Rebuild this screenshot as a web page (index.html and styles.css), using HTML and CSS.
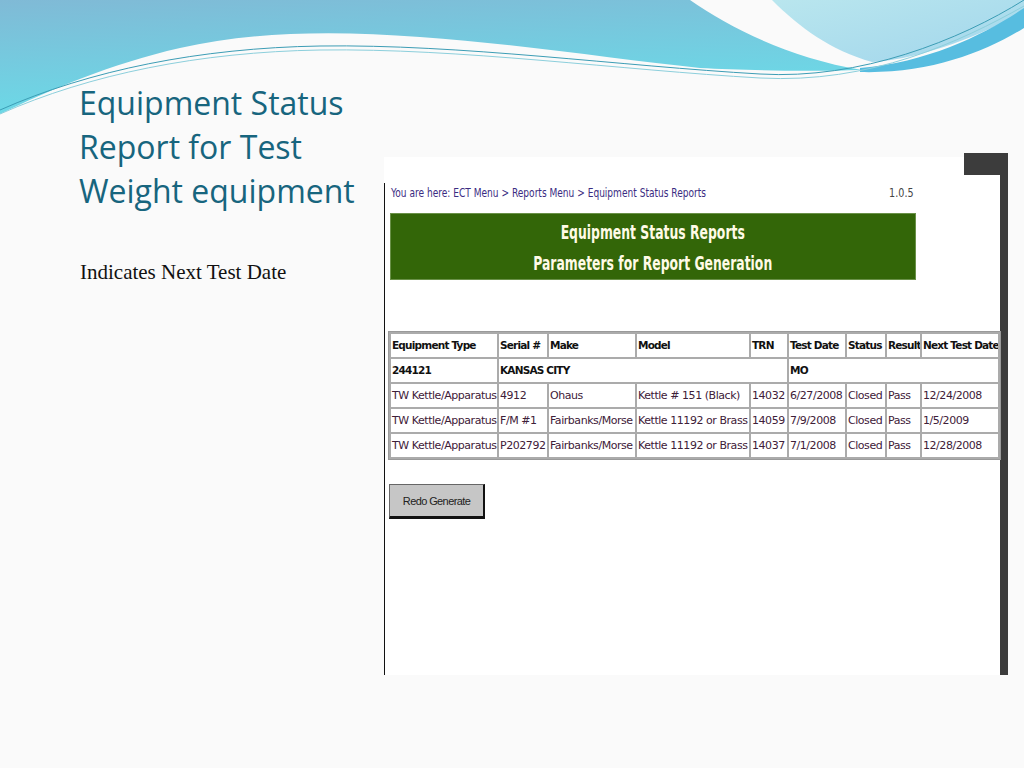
FILE: index.html
```html
<!DOCTYPE html>
<html lang="en">
  <head>
    <meta charset="utf-8" />
    <title>Equipment Status Report for Test Weight equipment</title>
    <link rel="stylesheet" href="styles.css">
  </head>
  <body>
    <div class="slide">
      <svg class="wave" width="1024" height="130" viewBox="0 0 1024 130">
        <defs>
          <linearGradient id="blue-left" x1="0" y1="0" x2="0.3" y2="1">
            <stop offset="0" stop-color="#80bad6" />
            <stop offset="1" stop-color="#6adbe8" />
          </linearGradient>
          <linearGradient id="cyan-right" x1="0" y1="0" x2="1" y2="1">
            <stop offset="0" stop-color="#b9e6ee" />
            <stop offset="1" stop-color="#a2d6ec" />
          </linearGradient>
        </defs>
        <path d="M0,0 H690 C730,28 790,58 862,70 C800,72 740,70 700,68 C620,60 520,44 420,37 C330,30 250,32 180,48 C110,64 50,90 0,114 Z" fill="url(#blue-left)" />
        <path d="M772,0 H1024 V12 C990,30 930,58 872,62 C830,50 800,28 772,0 Z" fill="url(#cyan-right)" />
        <path d="M860,68 C930,62 985,34 1024,8 V28 C985,52 930,74 860,72 Z" fill="#57bde0" />
        <path d="M0,110 C90,70 200,48 320,46 C460,44 620,66 760,74 C860,80 960,40 1024,0" fill="none" stroke="#3c9db5" stroke-width="1" />
        <path d="M0,114 C90,74 200,52 320,50 C460,48 620,70 760,78 C870,84 960,42 1024,6" fill="none" stroke="#8ccfdc" stroke-width="1" />
      </svg>

      <div class="slide-body">
        <div class="side">
          <h1 class="title">Equipment Status<br>Report for Test<br>Weight equipment</h1>
          <p class="note">Indicates Next Test Date</p>
        </div>

        <div class="shot">
          <div class="frame">
            <div class="crumb-row">
              <span class="crumb">You are here: ECT Menu &gt; Reports Menu &gt; Equipment Status Reports</span>
              <span class="version">1.0.5</span>
            </div>
            <div class="banner">
              <span class="banner-text">Equipment Status Reports<br>Parameters for Report Generation</span>
            </div>
            <table class="report">
              <colgroup>
                <col style="width: 106px">
                <col style="width: 48px">
                <col style="width: 86px">
                <col style="width: 112px">
                <col style="width: 36px">
                <col style="width: 56px">
                <col style="width: 38px">
                <col style="width: 33px">
                <col style="width: 76px">
              </colgroup>
              <tr class="head">
                <td>Equipment Type</td>
                <td>Serial #</td>
                <td>Make</td>
                <td>Model</td>
                <td>TRN</td>
                <td>Test Date</td>
                <td>Status</td>
                <td>Result</td>
                <td>Next Test Date</td>
              </tr>
              <tr class="head">
                <td>244121</td>
                <td colspan="4">KANSAS CITY</td>
                <td colspan="4">MO</td>
              </tr>
              <tr>
                <td>TW Kettle/Apparatus</td>
                <td>4912</td>
                <td>Ohaus</td>
                <td>Kettle # 151 (Black)</td>
                <td>14032</td>
                <td>6/27/2008</td>
                <td>Closed</td>
                <td>Pass</td>
                <td>12/24/2008</td>
              </tr>
              <tr>
                <td>TW Kettle/Apparatus</td>
                <td>F/M #1</td>
                <td>Fairbanks/Morse</td>
                <td>Kettle 11192 or Brass</td>
                <td>14059</td>
                <td>7/9/2008</td>
                <td>Closed</td>
                <td>Pass</td>
                <td>1/5/2009</td>
              </tr>
              <tr>
                <td>TW Kettle/Apparatus</td>
                <td>P202792</td>
                <td>Fairbanks/Morse</td>
                <td>Kettle 11192 or Brass</td>
                <td>14037</td>
                <td>7/1/2008</td>
                <td>Closed</td>
                <td>Pass</td>
                <td>12/28/2008</td>
              </tr>
            </table>
            <button class="btn-redo">Redo Generate</button>
          </div>
        </div>
      </div>
    </div>
  </body>
</html>
```

FILE: styles.css
```css
html, body {
  margin: 0;
  padding: 0;
}

body {
  background-color: #fafafa;
}

.slide {
  position: relative;
  width: 1024px;
  height: 768px;
  overflow: hidden;
  background-color: #fafafa;
}

.wave {
  position: absolute;
  top: 0;
  left: 0;
}

.slide-body {
  position: relative;
  display: flex;
  padding: 81px 0 0 79px;
}

.side {
  width: 305px;
  flex: none;
}

.title {
  margin: 0;
  font-family: "Open Sans", sans-serif;
  font-weight: 400;
  font-size: 32px;
  line-height: 44px;
  color: #17657e;
}

.note {
  margin: 47px 0 0 1px;
  font-family: "Liberation Serif", serif;
  font-size: 21px;
  line-height: 24px;
  color: #111;
}

/* the pasted screenshot of the web app */
.shot {
  position: relative;
  width: 624px;
  height: 518px;
  margin-top: 76px;
  padding-top: 26px;
  box-sizing: border-box;
  display: flex;
  flex-direction: column;
  background-color: #fff;
}

.shot::before {
  content: "";
  position: absolute;
  top: -4px;
  right: 0;
  width: 44px;
  height: 22px;
  background-color: #3c3c3c;
}

.shot::after {
  content: "";
  position: absolute;
  top: 18px;
  right: 0;
  width: 8px;
  height: 8px;
  background-color: #3c3c3c;
}

.frame {
  flex: 1;
  padding-top: 2px;
  border-left: 1px solid #111;
  border-right: 8px solid #3c3c3c;
  font-family: "DejaVu Sans", sans-serif;
}

.crumb-row {
  display: flex;
  justify-content: space-between;
  width: 523px;
  margin-left: 6px;
  font-size: 12px;
  line-height: 16px;
}

.crumb {
  display: inline-block;
  color: #3b2c82;
  white-space: nowrap;
  transform: scaleX(0.754);
  transform-origin: left center;
}

.version {
  display: inline-block;
  color: #444;
  transform: scaleX(0.8);
  transform-origin: right center;
}

.banner {
  width: 526px;
  height: 67px;
  margin: 12px 0 0 5px;
  padding-top: 3px;
  box-sizing: border-box;
  border: 1px solid #6a9148;
  background-color: #336608;
  color: #fffbe6;
  font-size: 20px;
  font-weight: bold;
  line-height: 31px;
  text-align: center;
  white-space: nowrap;
}

.banner-text {
  display: inline-block;
  transform: scaleX(0.62);
}

.report {
  width: 613px;
  margin: 51px 0 0 3px;
  table-layout: fixed;
  border-collapse: separate;
  border-spacing: 2px;
  border: 1px solid #9a9a9a;
  background-color: #ababab;
  font-size: 11px;
  letter-spacing: -0.45px;
}

.report td {
  padding: 0 1px;
  height: 23px;
  line-height: 23px;
  background-color: #fff;
  color: #3e2038;
  white-space: nowrap;
  overflow: hidden;
}

.report .head td {
  color: #111;
  font-size: 10.5px;
  font-weight: bold;
  letter-spacing: -0.8px;
}

.btn-redo {
  display: block;
  width: 96px;
  height: 35px;
  margin: 24px 0 0 4px;
  padding: 0;
  border-top: 1px solid #666;
  border-left: 1px solid #666;
  border-right: 2px solid #111;
  border-bottom: 3px solid #111;
  background-color: #c6c6c6;
  color: #222;
  font-family: "Liberation Sans", sans-serif;
  font-size: 11px;
  letter-spacing: -0.6px;
}
```
